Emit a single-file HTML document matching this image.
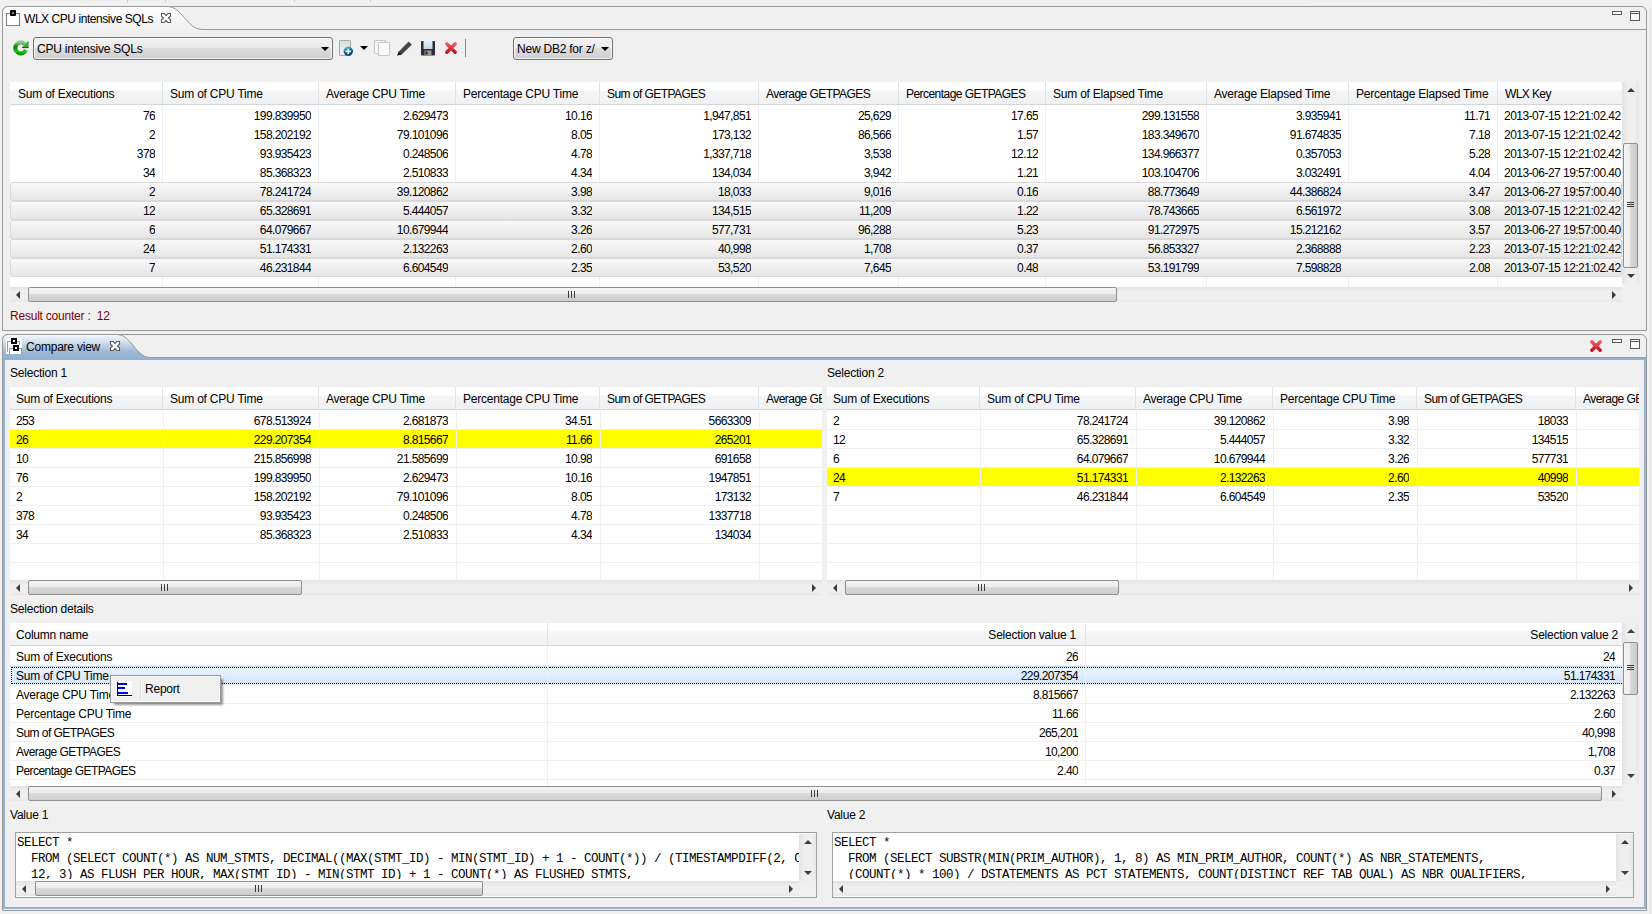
<!DOCTYPE html><html><head><meta charset="utf-8"><style>
*{margin:0;padding:0;box-sizing:border-box}
html,body{width:1652px;height:914px;overflow:hidden;background:#f0f0f0;font-family:"Liberation Sans",sans-serif;font-size:12px;color:#000}
.a{position:absolute}
.t{position:absolute;white-space:nowrap;line-height:14px;letter-spacing:-0.22px}
.cell.n,.t.n{letter-spacing:-0.62px}
.cell.dt{letter-spacing:-0.52px}
.hdr{position:absolute;background:linear-gradient(#fff 0,#fff 8px,#f4f5f7 9px,#f0f1f3 100%);border-bottom:1px solid #d5d5d5}
.hsep{position:absolute;width:1px;background:#e1e3e6}
.tbl{position:absolute;background:#fff;overflow:hidden}
.cell{position:absolute;white-space:nowrap;overflow:hidden;line-height:19px;height:19px;padding-top:1px;letter-spacing:-0.22px}
.r{text-align:right}
.sb-track-h{position:absolute;background:linear-gradient(#e6e6e6,#f0f0f0 40%,#f0f0f0 60%,#e9e9e9)}
.sb-track-v{position:absolute;background:linear-gradient(90deg,#e6e6e6,#f0f0f0 40%,#f0f0f0 60%,#e9e9e9)}
.thumb-h{position:absolute;border:1px solid #8f8f8f;border-radius:2px;background:linear-gradient(#f5f5f5 0,#ececec 45%,#d9d9d9 50%,#cdcdcd 100%)}
.thumb-v{position:absolute;border:1px solid #8f8f8f;border-radius:2px;background:linear-gradient(90deg,#f5f5f5 0,#ececec 45%,#d9d9d9 50%,#cdcdcd 100%)}
</style></head><body>
<div class="a" style="left:1310px;top:3px;width:172px;height:1px;background:#f7f7f7"></div>
<div class="a" style="left:127px;top:0px;width:1px;height:2px;background:#c8c8c8"></div>
<div class="a" style="left:165px;top:0px;width:1px;height:2px;background:#c8c8c8"></div>
<div class="a" style="left:294px;top:0px;width:1px;height:2px;background:#c8c8c8"></div>
<div class="a" style="left:370px;top:0px;width:1px;height:2px;background:#c8c8c8"></div>
<div class="a" style="left:2px;top:6px;width:1645px;height:325px;border:1px solid #9a9a9a;border-radius:6px 6px 0 0;background:#f0f0f0"></div>
<div class="a" style="left:3px;top:29px;width:1643px;height:1px;background:#9a9a9a"></div>
<svg class="a" style="left:2px;top:6px" width="210" height="24"><defs><linearGradient id="tg" x1="0" y1="0" x2="0" y2="1"><stop offset="0" stop-color="#ffffff"/><stop offset="1" stop-color="#f0f0f0"/></linearGradient></defs><path d="M0.5,24 L0.5,6.5 Q0.5,0.5 6.5,0.5 L166,0.5 C180,0.5 185,23.5 200,23.5 L210,23.5 L210,24 Z" fill="url(#tg)" stroke="none"/><path d="M0.5,24 L0.5,6.5 Q0.5,0.5 6.5,0.5 L166,0.5 C180,0.5 185,23.5 200,23.5 L210,23.5" fill="none" stroke="#9a9a9a" stroke-width="1"/></svg>
<div class="a" style="left:6px;top:13px;width:14px;height:13px;border:1px solid #808080;background:#fff"></div>
<div class="a" style="left:10px;top:10px;width:6px;height:6px;background:#000;border-radius:1px"></div>
<div class="a" style="left:12px;top:12px;width:2px;height:2px;background:#888"></div>
<div class="t " style="left:24px;top:12px;letter-spacing:-0.44px">WLX CPU intensive SQLs</div>
<svg class="a" style="left:160px;top:12px" width="12" height="12"><polygon points="1.5,1.5 4.2,1.5 6,3.6 7.8,1.5 10.5,1.5 10.5,4.2 8.4,6 10.5,7.8 10.5,10.5 7.8,10.5 6,8.4 4.2,10.5 1.5,10.5 1.5,7.8 3.6,6 1.5,4.2" fill="#fff" stroke="#5a5a5a" stroke-width="1.1"/></svg>
<div class="a" style="left:1612px;top:11px;width:10px;height:4px;border:1px solid #595959;background:#fff"></div>
<div class="a" style="left:1630px;top:11px;width:10px;height:10px;border:1px solid #595959;background:#fff"></div>
<div class="a" style="left:1631px;top:13px;width:8px;height:1px;background:#595959"></div>
<div class="a" style="left:1650px;top:8px;width:1px;height:906px;background:#e2e2e2"></div>
<svg class="a" style="left:12px;top:39px" width="18" height="18"><defs><linearGradient id="rg" x1="0" y1="0" x2="0" y2="1"><stop offset="0" stop-color="#86cf86"/><stop offset="0.4" stop-color="#0b7a0b"/><stop offset="0.85" stop-color="#16c816"/><stop offset="1" stop-color="#0a9a0a"/></linearGradient><linearGradient id="rf" x1="0" y1="0" x2="1" y2="0"><stop offset="0.55" stop-color="#f0f0f0" stop-opacity="0"/><stop offset="1" stop-color="#f0f0f0" stop-opacity="0.9"/></linearGradient></defs><path d="M13.9,10.9 A5.5,5.5 0 1 1 12.7,5.1" fill="none" stroke="url(#rg)" stroke-width="4.2"/><path d="M10,8.6 L16.6,8.6 L16.6,1.4 Z" fill="#3aa83a"/><path d="M10,8.6 L16.6,8.6" stroke="#006000" stroke-width="1"/><rect x="9" y="10" width="8" height="7" fill="url(#rf)"/></svg>
<div class="a" style="left:33px;top:37px;width:300px;height:23px;border:1px solid #707070;border-radius:3px;box-shadow:inset 0 0 0 1px rgba(255,255,255,0.75);background:linear-gradient(#f2f2f2 0,#ebebeb 45%,#dddddd 50%,#cfcfcf 100%)"></div>
<div class="t " style="left:37px;top:42px;">CPU intensive SQLs</div>
<div class="a" style="left:321px;top:47px;width:0;height:0;border-left:4px solid transparent;border-right:4px solid transparent;border-top:4px solid #000"></div>
<div class="a" style="left:339px;top:40px;width:12px;height:16px;border:1px solid #a8a8a8;border-radius:1px;background:linear-gradient(#d9dadd,#f6f6f6)"></div>
<svg class="a" style="left:343px;top:46px" width="11" height="11"><defs><linearGradient id="ng" x1="0.2" y1="0" x2="0.6" y2="1"><stop offset="0" stop-color="#5cc8e0"/><stop offset="0.5" stop-color="#0a6a9a"/><stop offset="1" stop-color="#002a66"/></linearGradient></defs><circle cx="5.3" cy="5.2" r="4.7" fill="url(#ng)"/><path d="M5.3,2.4 V8.2 M2.5,5.3 H8.1" stroke="#fff" stroke-width="1.7"/></svg>
<div class="a" style="left:360px;top:46px;width:0;height:0;border-left:4px solid transparent;border-right:4px solid transparent;border-top:4px solid #000"></div>
<div class="a" style="left:374px;top:40px;width:12px;height:14px;border:1px solid #c8c8c8;border-radius:1px;background:linear-gradient(#f0f0f0,#fcfcfc)"></div>
<div class="a" style="left:378px;top:42px;width:12px;height:14px;border:1px solid #c8c8c8;border-radius:1px;background:#fafafa"></div>
<svg class="a" style="left:396px;top:40px" width="18" height="17"><path d="M1.3,15.6 L2.6,11.8 L12.6,1.6 L15.8,4.8 L5.6,14.6 Z" fill="#3c3c3c"/><path d="M1.3,15.6 L2.6,11.8 L5.6,14.6 Z" fill="#1a1a1a"/><path d="M3.5,11.5 L13,2.2 M5,13 L14.5,3.8" stroke="#6a6a6a" stroke-width="0.6"/></svg>
<svg class="a" style="left:421px;top:41px" width="14" height="15"><defs><linearGradient id="fl" x1="0" y1="0" x2="0" y2="1"><stop offset="0" stop-color="#e6eef8"/><stop offset="1" stop-color="#c4d6ea"/></linearGradient></defs><rect x="0" y="0" width="14" height="14.5" rx="0.8" fill="#2e2e2e"/><rect x="2.5" y="0" width="9" height="8" fill="url(#fl)"/><rect x="3.5" y="9.5" width="7" height="5" fill="#9a9a9a"/><rect x="4.5" y="10.5" width="2" height="3" fill="#202020"/></svg>
<svg class="a" style="left:444px;top:41px" width="14" height="14"><defs><linearGradient id="rx" x1="0" y1="0" x2="0" y2="1"><stop offset="0" stop-color="#f05a66"/><stop offset="1" stop-color="#c8101e"/></linearGradient></defs><path d="M2.8,2.8 L11.2,11.2 M11.2,2.8 L2.8,11.2" stroke="url(#rx)" stroke-width="3.4" stroke-linecap="round"/></svg>
<div class="a" style="left:465px;top:39px;width:1px;height:18px;background:#8a8a8a"></div>
<div class="a" style="left:513px;top:37px;width:100px;height:23px;border:1px solid #707070;border-radius:3px;box-shadow:inset 0 0 0 1px rgba(255,255,255,0.75);background:linear-gradient(#f2f2f2 0,#ebebeb 45%,#dddddd 50%,#cfcfcf 100%)"></div>
<div class="t " style="left:517px;top:42px;">New DB2 for z/</div>
<div class="a" style="left:601px;top:47px;width:0;height:0;border-left:4px solid transparent;border-right:4px solid transparent;border-top:4px solid #000"></div>
<div class="tbl" style="left:10px;top:82px;width:1612px;height:205px">
<div class="hdr" style="left:0;top:0;width:1612px;height:23px"></div>
<div class="cell" style="left:8px;top:2px;width:144px;">Sum of Executions</div>
<div class="hsep" style="left:152px;top:0;height:22px"></div>
<div class="cell" style="left:160px;top:2px;width:148px;">Sum of CPU Time</div>
<div class="hsep" style="left:308px;top:0;height:22px"></div>
<div class="cell" style="left:316px;top:2px;width:129px;">Average CPU Time</div>
<div class="hsep" style="left:445px;top:0;height:22px"></div>
<div class="cell" style="left:453px;top:2px;width:136px;">Percentage CPU Time</div>
<div class="hsep" style="left:589px;top:0;height:22px"></div>
<div class="cell" style="left:597px;top:2px;width:151px;letter-spacing:-0.55px;">Sum of GETPAGES</div>
<div class="hsep" style="left:748px;top:0;height:22px"></div>
<div class="cell" style="left:756px;top:2px;width:132px;letter-spacing:-0.55px;">Average GETPAGES</div>
<div class="hsep" style="left:888px;top:0;height:22px"></div>
<div class="cell" style="left:896px;top:2px;width:139px;letter-spacing:-0.55px;">Percentage GETPAGES</div>
<div class="hsep" style="left:1035px;top:0;height:22px"></div>
<div class="cell" style="left:1043px;top:2px;width:153px;">Sum of Elapsed Time</div>
<div class="hsep" style="left:1196px;top:0;height:22px"></div>
<div class="cell" style="left:1204px;top:2px;width:134px;">Average Elapsed Time</div>
<div class="hsep" style="left:1338px;top:0;height:22px"></div>
<div class="cell" style="left:1346px;top:2px;width:141px;">Percentage Elapsed Time</div>
<div class="hsep" style="left:1487px;top:0;height:22px"></div>
<div class="cell" style="left:1495px;top:2px;width:117px;letter-spacing:-0.6px;">WLX Key</div>
<div class="a" style="left:152px;top:24px;width:1px;height:181px;background:#eaf1fa"></div>
<div class="a" style="left:308px;top:24px;width:1px;height:181px;background:#eaf1fa"></div>
<div class="a" style="left:445px;top:24px;width:1px;height:181px;background:#eaf1fa"></div>
<div class="a" style="left:589px;top:24px;width:1px;height:181px;background:#eaf1fa"></div>
<div class="a" style="left:748px;top:24px;width:1px;height:181px;background:#eaf1fa"></div>
<div class="a" style="left:888px;top:24px;width:1px;height:181px;background:#eaf1fa"></div>
<div class="a" style="left:1035px;top:24px;width:1px;height:181px;background:#eaf1fa"></div>
<div class="a" style="left:1196px;top:24px;width:1px;height:181px;background:#eaf1fa"></div>
<div class="a" style="left:1338px;top:24px;width:1px;height:181px;background:#eaf1fa"></div>
<div class="a" style="left:1487px;top:24px;width:1px;height:181px;background:#eaf1fa"></div>
<div class="a" style="left:0;top:100px;width:1612px;height:19px;border:1px solid #d9d9d9;border-radius:2px;background:linear-gradient(#f9f9f9,#e6e6e6)"></div>
<div class="a" style="left:0;top:119px;width:1612px;height:19px;border:1px solid #d9d9d9;border-radius:2px;background:linear-gradient(#f9f9f9,#e6e6e6)"></div>
<div class="a" style="left:0;top:138px;width:1612px;height:19px;border:1px solid #d9d9d9;border-radius:2px;background:linear-gradient(#f9f9f9,#e6e6e6)"></div>
<div class="a" style="left:0;top:157px;width:1612px;height:19px;border:1px solid #d9d9d9;border-radius:2px;background:linear-gradient(#f9f9f9,#e6e6e6)"></div>
<div class="a" style="left:0;top:176px;width:1612px;height:19px;border:1px solid #d9d9d9;border-radius:2px;background:linear-gradient(#f9f9f9,#e6e6e6)"></div>
<div class="cell r n" style="left:0px;top:24px;width:145px">76</div>
<div class="cell r n" style="left:152px;top:24px;width:149px">199.839950</div>
<div class="cell r n" style="left:308px;top:24px;width:130px">2.629473</div>
<div class="cell r n" style="left:445px;top:24px;width:137px">10.16</div>
<div class="cell r n" style="left:589px;top:24px;width:152px">1,947,851</div>
<div class="cell r n" style="left:748px;top:24px;width:133px">25,629</div>
<div class="cell r n" style="left:888px;top:24px;width:140px">17.65</div>
<div class="cell r n" style="left:1035px;top:24px;width:154px">299.131558</div>
<div class="cell r n" style="left:1196px;top:24px;width:135px">3.935941</div>
<div class="cell r n" style="left:1338px;top:24px;width:142px">11.71</div>
<div class="cell dt" style="left:1494px;top:24px;width:145px">2013-07-15 12:21:02.42</div>
<div class="cell r n" style="left:0px;top:43px;width:145px">2</div>
<div class="cell r n" style="left:152px;top:43px;width:149px">158.202192</div>
<div class="cell r n" style="left:308px;top:43px;width:130px">79.101096</div>
<div class="cell r n" style="left:445px;top:43px;width:137px">8.05</div>
<div class="cell r n" style="left:589px;top:43px;width:152px">173,132</div>
<div class="cell r n" style="left:748px;top:43px;width:133px">86,566</div>
<div class="cell r n" style="left:888px;top:43px;width:140px">1.57</div>
<div class="cell r n" style="left:1035px;top:43px;width:154px">183.349670</div>
<div class="cell r n" style="left:1196px;top:43px;width:135px">91.674835</div>
<div class="cell r n" style="left:1338px;top:43px;width:142px">7.18</div>
<div class="cell dt" style="left:1494px;top:43px;width:145px">2013-07-15 12:21:02.42</div>
<div class="cell r n" style="left:0px;top:62px;width:145px">378</div>
<div class="cell r n" style="left:152px;top:62px;width:149px">93.935423</div>
<div class="cell r n" style="left:308px;top:62px;width:130px">0.248506</div>
<div class="cell r n" style="left:445px;top:62px;width:137px">4.78</div>
<div class="cell r n" style="left:589px;top:62px;width:152px">1,337,718</div>
<div class="cell r n" style="left:748px;top:62px;width:133px">3,538</div>
<div class="cell r n" style="left:888px;top:62px;width:140px">12.12</div>
<div class="cell r n" style="left:1035px;top:62px;width:154px">134.966377</div>
<div class="cell r n" style="left:1196px;top:62px;width:135px">0.357053</div>
<div class="cell r n" style="left:1338px;top:62px;width:142px">5.28</div>
<div class="cell dt" style="left:1494px;top:62px;width:145px">2013-07-15 12:21:02.42</div>
<div class="cell r n" style="left:0px;top:81px;width:145px">34</div>
<div class="cell r n" style="left:152px;top:81px;width:149px">85.368323</div>
<div class="cell r n" style="left:308px;top:81px;width:130px">2.510833</div>
<div class="cell r n" style="left:445px;top:81px;width:137px">4.34</div>
<div class="cell r n" style="left:589px;top:81px;width:152px">134,034</div>
<div class="cell r n" style="left:748px;top:81px;width:133px">3,942</div>
<div class="cell r n" style="left:888px;top:81px;width:140px">1.21</div>
<div class="cell r n" style="left:1035px;top:81px;width:154px">103.104706</div>
<div class="cell r n" style="left:1196px;top:81px;width:135px">3.032491</div>
<div class="cell r n" style="left:1338px;top:81px;width:142px">4.04</div>
<div class="cell dt" style="left:1494px;top:81px;width:145px">2013-06-27 19:57:00.40</div>
<div class="cell r n" style="left:0px;top:100px;width:145px">2</div>
<div class="cell r n" style="left:152px;top:100px;width:149px">78.241724</div>
<div class="cell r n" style="left:308px;top:100px;width:130px">39.120862</div>
<div class="cell r n" style="left:445px;top:100px;width:137px">3.98</div>
<div class="cell r n" style="left:589px;top:100px;width:152px">18,033</div>
<div class="cell r n" style="left:748px;top:100px;width:133px">9,016</div>
<div class="cell r n" style="left:888px;top:100px;width:140px">0.16</div>
<div class="cell r n" style="left:1035px;top:100px;width:154px">88.773649</div>
<div class="cell r n" style="left:1196px;top:100px;width:135px">44.386824</div>
<div class="cell r n" style="left:1338px;top:100px;width:142px">3.47</div>
<div class="cell dt" style="left:1494px;top:100px;width:145px">2013-06-27 19:57:00.40</div>
<div class="cell r n" style="left:0px;top:119px;width:145px">12</div>
<div class="cell r n" style="left:152px;top:119px;width:149px">65.328691</div>
<div class="cell r n" style="left:308px;top:119px;width:130px">5.444057</div>
<div class="cell r n" style="left:445px;top:119px;width:137px">3.32</div>
<div class="cell r n" style="left:589px;top:119px;width:152px">134,515</div>
<div class="cell r n" style="left:748px;top:119px;width:133px">11,209</div>
<div class="cell r n" style="left:888px;top:119px;width:140px">1.22</div>
<div class="cell r n" style="left:1035px;top:119px;width:154px">78.743665</div>
<div class="cell r n" style="left:1196px;top:119px;width:135px">6.561972</div>
<div class="cell r n" style="left:1338px;top:119px;width:142px">3.08</div>
<div class="cell dt" style="left:1494px;top:119px;width:145px">2013-07-15 12:21:02.42</div>
<div class="cell r n" style="left:0px;top:138px;width:145px">6</div>
<div class="cell r n" style="left:152px;top:138px;width:149px">64.079667</div>
<div class="cell r n" style="left:308px;top:138px;width:130px">10.679944</div>
<div class="cell r n" style="left:445px;top:138px;width:137px">3.26</div>
<div class="cell r n" style="left:589px;top:138px;width:152px">577,731</div>
<div class="cell r n" style="left:748px;top:138px;width:133px">96,288</div>
<div class="cell r n" style="left:888px;top:138px;width:140px">5.23</div>
<div class="cell r n" style="left:1035px;top:138px;width:154px">91.272975</div>
<div class="cell r n" style="left:1196px;top:138px;width:135px">15.212162</div>
<div class="cell r n" style="left:1338px;top:138px;width:142px">3.57</div>
<div class="cell dt" style="left:1494px;top:138px;width:145px">2013-06-27 19:57:00.40</div>
<div class="cell r n" style="left:0px;top:157px;width:145px">24</div>
<div class="cell r n" style="left:152px;top:157px;width:149px">51.174331</div>
<div class="cell r n" style="left:308px;top:157px;width:130px">2.132263</div>
<div class="cell r n" style="left:445px;top:157px;width:137px">2.60</div>
<div class="cell r n" style="left:589px;top:157px;width:152px">40,998</div>
<div class="cell r n" style="left:748px;top:157px;width:133px">1,708</div>
<div class="cell r n" style="left:888px;top:157px;width:140px">0.37</div>
<div class="cell r n" style="left:1035px;top:157px;width:154px">56.853327</div>
<div class="cell r n" style="left:1196px;top:157px;width:135px">2.368888</div>
<div class="cell r n" style="left:1338px;top:157px;width:142px">2.23</div>
<div class="cell dt" style="left:1494px;top:157px;width:145px">2013-07-15 12:21:02.42</div>
<div class="cell r n" style="left:0px;top:176px;width:145px">7</div>
<div class="cell r n" style="left:152px;top:176px;width:149px">46.231844</div>
<div class="cell r n" style="left:308px;top:176px;width:130px">6.604549</div>
<div class="cell r n" style="left:445px;top:176px;width:137px">2.35</div>
<div class="cell r n" style="left:589px;top:176px;width:152px">53,520</div>
<div class="cell r n" style="left:748px;top:176px;width:133px">7,645</div>
<div class="cell r n" style="left:888px;top:176px;width:140px">0.48</div>
<div class="cell r n" style="left:1035px;top:176px;width:154px">53.191799</div>
<div class="cell r n" style="left:1196px;top:176px;width:135px">7.598828</div>
<div class="cell r n" style="left:1338px;top:176px;width:142px">2.08</div>
<div class="cell dt" style="left:1494px;top:176px;width:145px">2013-07-15 12:21:02.42</div>
</div>
<div class="a" style="left:1622px;top:82px;width:17px;height:202px;background:linear-gradient(90deg,#e3e3e3,#eeeeee 30%,#f0f0f0 70%,#e8e8e8)"></div>
<div class="a" style="left:1627px;top:88px;width:0;height:0;border-left:4px solid transparent;border-right:4px solid transparent;border-bottom:4px solid #3d3d3d"></div>
<div class="a" style="left:1627px;top:274px;width:0;height:0;border-left:4px solid transparent;border-right:4px solid transparent;border-top:4px solid #3d3d3d"></div>
<div class="thumb-v" style="left:1623px;top:143px;width:15px;height:125px"></div>
<div class="a" style="left:1627px;top:202px;width:7px;height:1px;background:#3a3a3a"></div>
<div class="a" style="left:1627px;top:204px;width:7px;height:1px;background:#3a3a3a"></div>
<div class="a" style="left:1627px;top:206px;width:7px;height:1px;background:#3a3a3a"></div>
<div class="a" style="left:10px;top:287px;width:1612px;height:15px;background:linear-gradient(#e3e3e3,#eeeeee 30%,#f0f0f0 70%,#e8e8e8)"></div>
<div class="a" style="left:16px;top:291px;width:0;height:0;border-top:4px solid transparent;border-bottom:4px solid transparent;border-right:4px solid #3d3d3d"></div>
<div class="a" style="left:1612px;top:291px;width:0;height:0;border-top:4px solid transparent;border-bottom:4px solid transparent;border-left:4px solid #3d3d3d"></div>
<div class="thumb-h" style="left:28px;top:287px;width:1089px;height:15px"></div>
<div class="a" style="left:568px;top:291px;width:1px;height:7px;background:#3a3a3a"></div>
<div class="a" style="left:571px;top:291px;width:1px;height:7px;background:#3a3a3a"></div>
<div class="a" style="left:574px;top:291px;width:1px;height:7px;background:#3a3a3a"></div>
<div class="a" style="left:1622px;top:284px;width:18px;height:18px;background:#f0f0f0"></div>
<div class="t " style="left:10px;top:309px;color:#800000">Result counter :&nbsp; 12</div>
<div class="a" style="left:2px;top:334px;width:1645px;height:577px;border:1px solid #9a9a9a;border-radius:6px 6px 0 0;background:#f0f0f0"></div>
<svg class="a" style="left:2px;top:334px" width="160" height="24"><defs><linearGradient id="bg" x1="0" y1="0" x2="0" y2="1"><stop offset="0" stop-color="#f4f8fc"/><stop offset="0.3" stop-color="#d5e1ee"/><stop offset="0.75" stop-color="#9cb6d4"/><stop offset="1" stop-color="#95b1d2"/></linearGradient></defs><path d="M0.5,24 L0.5,6.5 Q0.5,0.5 6.5,0.5 L115.5,0.5 C129,0.5 134,23.5 148,23.5 L160,23.5 L160,24 Z" fill="url(#bg)"/><path d="M0.5,24 L0.5,6.5 Q0.5,0.5 6.5,0.5 L115.5,0.5 C129,0.5 134,23.5 148,23.5 L160,23.5" fill="none" stroke="#9a9a9a"/></svg>
<div class="a" style="left:150px;top:357px;width:1496px;height:1px;background:#9a9a9a"></div>
<div class="a" style="left:3px;top:358px;width:1643px;height:2px;background:#95b1d2"></div>
<div class="a" style="left:3px;top:358px;width:2px;height:551px;background:#95b1d2"></div>
<div class="a" style="left:1644px;top:358px;width:2px;height:551px;background:#95b1d2"></div>
<div class="a" style="left:3px;top:907px;width:1643px;height:2px;background:#95b1d2"></div>
<div class="a" style="left:6px;top:338px;width:16px;height:16px;background:#fff"></div>
<div class="a" style="left:7px;top:341px;width:1px;height:11px;background:#9a9a9a"></div>
<div class="a" style="left:7px;top:341px;width:13px;height:1px;background:#9a9a9a"></div>
<div class="a" style="left:19px;top:341px;width:1px;height:4px;background:#9a9a9a"></div>
<div class="a" style="left:9px;top:348px;width:1px;height:6px;background:#9a9a9a"></div>
<div class="a" style="left:9px;top:348px;width:12px;height:1px;background:#9a9a9a"></div>
<div class="a" style="left:21px;top:348px;width:1px;height:6px;background:#9a9a9a"></div>
<div class="a" style="left:11px;top:338px;width:6px;height:6px;border:2px solid #000;background:#fff"></div>
<div class="a" style="left:13px;top:345px;width:6px;height:6px;border:2px solid #000;background:#fff"></div>
<div class="t " style="left:26px;top:340px;">Compare view</div>
<svg class="a" style="left:109px;top:340px" width="12" height="12"><polygon points="1.5,1.5 4.2,1.5 6,3.6 7.8,1.5 10.5,1.5 10.5,4.2 8.4,6 10.5,7.8 10.5,10.5 7.8,10.5 6,8.4 4.2,10.5 1.5,10.5 1.5,7.8 3.6,6 1.5,4.2" fill="#fff" stroke="#5a5a5a" stroke-width="1.1"/></svg>
<svg class="a" style="left:1589px;top:339px" width="14" height="14"><defs><linearGradient id="rx2" x1="0" y1="0" x2="0" y2="1"><stop offset="0" stop-color="#f05a66"/><stop offset="1" stop-color="#c8101e"/></linearGradient></defs><path d="M2.8,2.8 L11.2,11.2 M11.2,2.8 L2.8,11.2" stroke="url(#rx2)" stroke-width="3.4" stroke-linecap="round"/></svg>
<div class="a" style="left:1612px;top:339px;width:10px;height:4px;border:1px solid #595959;background:#fff"></div>
<div class="a" style="left:1630px;top:339px;width:10px;height:10px;border:1px solid #595959;background:#fff"></div>
<div class="a" style="left:1631px;top:341px;width:8px;height:1px;background:#595959"></div>
<div class="t " style="left:10px;top:366px;">Selection 1</div>
<div class="t " style="left:827px;top:366px;">Selection 2</div>
<div class="tbl" style="left:10px;top:387px;width:812px;height:193px">
<div class="hdr" style="left:0;top:0;width:812px;height:23px"></div>
<div class="cell" style="left:6px;top:2px;width:144px;">Sum of Executions</div>
<div class="hsep" style="left:152px;top:0;height:22px"></div>
<div class="cell" style="left:160px;top:2px;width:148px;">Sum of CPU Time</div>
<div class="hsep" style="left:308px;top:0;height:22px"></div>
<div class="cell" style="left:316px;top:2px;width:129px;">Average CPU Time</div>
<div class="hsep" style="left:445px;top:0;height:22px"></div>
<div class="cell" style="left:453px;top:2px;width:136px;">Percentage CPU Time</div>
<div class="hsep" style="left:589px;top:0;height:22px"></div>
<div class="cell" style="left:597px;top:2px;width:151px;letter-spacing:-0.55px;">Sum of GETPAGES</div>
<div class="hsep" style="left:748px;top:0;height:22px"></div>
<div class="cell" style="left:756px;top:2px;width:234px;letter-spacing:-0.55px;">Average GETPAGES</div>
<div class="a" style="left:0;top:42px;width:812px;height:1px;background:#f0f0f0"></div>
<div class="a" style="left:0;top:43px;width:812px;height:19px;background:#ffff00"></div>
<div class="a" style="left:0;top:61px;width:812px;height:1px;background:#f0f0f0"></div>
<div class="a" style="left:0;top:80px;width:812px;height:1px;background:#f0f0f0"></div>
<div class="a" style="left:0;top:99px;width:812px;height:1px;background:#f0f0f0"></div>
<div class="a" style="left:0;top:118px;width:812px;height:1px;background:#f0f0f0"></div>
<div class="a" style="left:0;top:137px;width:812px;height:1px;background:#f0f0f0"></div>
<div class="a" style="left:0;top:156px;width:812px;height:1px;background:#f0f0f0"></div>
<div class="a" style="left:0;top:175px;width:812px;height:1px;background:#f0f0f0"></div>
<div class="a" style="left:0;top:194px;width:812px;height:1px;background:#f0f0f0"></div>
<div class="a" style="left:153px;top:24px;width:1px;height:169px;background:#f0f0f0"></div>
<div class="a" style="left:309px;top:24px;width:1px;height:169px;background:#f0f0f0"></div>
<div class="a" style="left:446px;top:24px;width:1px;height:169px;background:#f0f0f0"></div>
<div class="a" style="left:590px;top:24px;width:1px;height:169px;background:#f0f0f0"></div>
<div class="a" style="left:749px;top:24px;width:1px;height:169px;background:#f0f0f0"></div>
<div class="cell n" style="left:6px;top:24px;width:145px">253</div>
<div class="cell r n" style="left:152px;top:24px;width:149px">678.513924</div>
<div class="cell r n" style="left:308px;top:24px;width:130px">2.681873</div>
<div class="cell r n" style="left:445px;top:24px;width:137px">34.51</div>
<div class="cell r n" style="left:589px;top:24px;width:152px">5663309</div>
<div class="cell n" style="left:6px;top:43px;width:145px">26</div>
<div class="cell r n" style="left:152px;top:43px;width:149px">229.207354</div>
<div class="cell r n" style="left:308px;top:43px;width:130px">8.815667</div>
<div class="cell r n" style="left:445px;top:43px;width:137px">11.66</div>
<div class="cell r n" style="left:589px;top:43px;width:152px">265201</div>
<div class="cell n" style="left:6px;top:62px;width:145px">10</div>
<div class="cell r n" style="left:152px;top:62px;width:149px">215.856998</div>
<div class="cell r n" style="left:308px;top:62px;width:130px">21.585699</div>
<div class="cell r n" style="left:445px;top:62px;width:137px">10.98</div>
<div class="cell r n" style="left:589px;top:62px;width:152px">691658</div>
<div class="cell n" style="left:6px;top:81px;width:145px">76</div>
<div class="cell r n" style="left:152px;top:81px;width:149px">199.839950</div>
<div class="cell r n" style="left:308px;top:81px;width:130px">2.629473</div>
<div class="cell r n" style="left:445px;top:81px;width:137px">10.16</div>
<div class="cell r n" style="left:589px;top:81px;width:152px">1947851</div>
<div class="cell n" style="left:6px;top:100px;width:145px">2</div>
<div class="cell r n" style="left:152px;top:100px;width:149px">158.202192</div>
<div class="cell r n" style="left:308px;top:100px;width:130px">79.101096</div>
<div class="cell r n" style="left:445px;top:100px;width:137px">8.05</div>
<div class="cell r n" style="left:589px;top:100px;width:152px">173132</div>
<div class="cell n" style="left:6px;top:119px;width:145px">378</div>
<div class="cell r n" style="left:152px;top:119px;width:149px">93.935423</div>
<div class="cell r n" style="left:308px;top:119px;width:130px">0.248506</div>
<div class="cell r n" style="left:445px;top:119px;width:137px">4.78</div>
<div class="cell r n" style="left:589px;top:119px;width:152px">1337718</div>
<div class="cell n" style="left:6px;top:138px;width:145px">34</div>
<div class="cell r n" style="left:152px;top:138px;width:149px">85.368323</div>
<div class="cell r n" style="left:308px;top:138px;width:130px">2.510833</div>
<div class="cell r n" style="left:445px;top:138px;width:137px">4.34</div>
<div class="cell r n" style="left:589px;top:138px;width:152px">134034</div>
</div>
<div class="a" style="left:10px;top:580px;width:812px;height:15px;background:linear-gradient(#e3e3e3,#eeeeee 30%,#f0f0f0 70%,#e8e8e8)"></div>
<div class="a" style="left:16px;top:584px;width:0;height:0;border-top:4px solid transparent;border-bottom:4px solid transparent;border-right:4px solid #3d3d3d"></div>
<div class="a" style="left:812px;top:584px;width:0;height:0;border-top:4px solid transparent;border-bottom:4px solid transparent;border-left:4px solid #3d3d3d"></div>
<div class="thumb-h" style="left:28px;top:580px;width:274px;height:15px"></div>
<div class="a" style="left:161px;top:584px;width:1px;height:7px;background:#3a3a3a"></div>
<div class="a" style="left:164px;top:584px;width:1px;height:7px;background:#3a3a3a"></div>
<div class="a" style="left:167px;top:584px;width:1px;height:7px;background:#3a3a3a"></div>
<div class="tbl" style="left:827px;top:387px;width:812px;height:193px">
<div class="hdr" style="left:0;top:0;width:812px;height:23px"></div>
<div class="cell" style="left:6px;top:2px;width:144px;">Sum of Executions</div>
<div class="hsep" style="left:152px;top:0;height:22px"></div>
<div class="cell" style="left:160px;top:2px;width:148px;">Sum of CPU Time</div>
<div class="hsep" style="left:308px;top:0;height:22px"></div>
<div class="cell" style="left:316px;top:2px;width:129px;">Average CPU Time</div>
<div class="hsep" style="left:445px;top:0;height:22px"></div>
<div class="cell" style="left:453px;top:2px;width:136px;">Percentage CPU Time</div>
<div class="hsep" style="left:589px;top:0;height:22px"></div>
<div class="cell" style="left:597px;top:2px;width:151px;letter-spacing:-0.55px;">Sum of GETPAGES</div>
<div class="hsep" style="left:748px;top:0;height:22px"></div>
<div class="cell" style="left:756px;top:2px;width:234px;letter-spacing:-0.55px;">Average GETPAGES</div>
<div class="a" style="left:0;top:42px;width:812px;height:1px;background:#f0f0f0"></div>
<div class="a" style="left:0;top:61px;width:812px;height:1px;background:#f0f0f0"></div>
<div class="a" style="left:0;top:80px;width:812px;height:1px;background:#f0f0f0"></div>
<div class="a" style="left:0;top:81px;width:812px;height:19px;background:#ffff00"></div>
<div class="a" style="left:0;top:99px;width:812px;height:1px;background:#f0f0f0"></div>
<div class="a" style="left:0;top:118px;width:812px;height:1px;background:#f0f0f0"></div>
<div class="a" style="left:0;top:137px;width:812px;height:1px;background:#f0f0f0"></div>
<div class="a" style="left:0;top:156px;width:812px;height:1px;background:#f0f0f0"></div>
<div class="a" style="left:0;top:175px;width:812px;height:1px;background:#f0f0f0"></div>
<div class="a" style="left:0;top:194px;width:812px;height:1px;background:#f0f0f0"></div>
<div class="a" style="left:153px;top:24px;width:1px;height:169px;background:#f0f0f0"></div>
<div class="a" style="left:309px;top:24px;width:1px;height:169px;background:#f0f0f0"></div>
<div class="a" style="left:446px;top:24px;width:1px;height:169px;background:#f0f0f0"></div>
<div class="a" style="left:590px;top:24px;width:1px;height:169px;background:#f0f0f0"></div>
<div class="a" style="left:749px;top:24px;width:1px;height:169px;background:#f0f0f0"></div>
<div class="cell n" style="left:6px;top:24px;width:145px">2</div>
<div class="cell r n" style="left:152px;top:24px;width:149px">78.241724</div>
<div class="cell r n" style="left:308px;top:24px;width:130px">39.120862</div>
<div class="cell r n" style="left:445px;top:24px;width:137px">3.98</div>
<div class="cell r n" style="left:589px;top:24px;width:152px">18033</div>
<div class="cell n" style="left:6px;top:43px;width:145px">12</div>
<div class="cell r n" style="left:152px;top:43px;width:149px">65.328691</div>
<div class="cell r n" style="left:308px;top:43px;width:130px">5.444057</div>
<div class="cell r n" style="left:445px;top:43px;width:137px">3.32</div>
<div class="cell r n" style="left:589px;top:43px;width:152px">134515</div>
<div class="cell n" style="left:6px;top:62px;width:145px">6</div>
<div class="cell r n" style="left:152px;top:62px;width:149px">64.079667</div>
<div class="cell r n" style="left:308px;top:62px;width:130px">10.679944</div>
<div class="cell r n" style="left:445px;top:62px;width:137px">3.26</div>
<div class="cell r n" style="left:589px;top:62px;width:152px">577731</div>
<div class="cell n" style="left:6px;top:81px;width:145px">24</div>
<div class="cell r n" style="left:152px;top:81px;width:149px">51.174331</div>
<div class="cell r n" style="left:308px;top:81px;width:130px">2.132263</div>
<div class="cell r n" style="left:445px;top:81px;width:137px">2.60</div>
<div class="cell r n" style="left:589px;top:81px;width:152px">40998</div>
<div class="cell n" style="left:6px;top:100px;width:145px">7</div>
<div class="cell r n" style="left:152px;top:100px;width:149px">46.231844</div>
<div class="cell r n" style="left:308px;top:100px;width:130px">6.604549</div>
<div class="cell r n" style="left:445px;top:100px;width:137px">2.35</div>
<div class="cell r n" style="left:589px;top:100px;width:152px">53520</div>
</div>
<div class="a" style="left:827px;top:580px;width:812px;height:15px;background:linear-gradient(#e3e3e3,#eeeeee 30%,#f0f0f0 70%,#e8e8e8)"></div>
<div class="a" style="left:833px;top:584px;width:0;height:0;border-top:4px solid transparent;border-bottom:4px solid transparent;border-right:4px solid #3d3d3d"></div>
<div class="a" style="left:1629px;top:584px;width:0;height:0;border-top:4px solid transparent;border-bottom:4px solid transparent;border-left:4px solid #3d3d3d"></div>
<div class="thumb-h" style="left:845px;top:580px;width:274px;height:15px"></div>
<div class="a" style="left:978px;top:584px;width:1px;height:7px;background:#3a3a3a"></div>
<div class="a" style="left:981px;top:584px;width:1px;height:7px;background:#3a3a3a"></div>
<div class="a" style="left:984px;top:584px;width:1px;height:7px;background:#3a3a3a"></div>
<div class="t " style="left:10px;top:602px;">Selection details</div>
<div class="tbl" style="left:10px;top:623px;width:1612px;height:163px">
<div class="hdr" style="left:0;top:0;width:1612px;height:23px"></div>
<div class="cell" style="left:6px;top:2px;width:529px;">Column name</div>
<div class="hsep" style="left:537px;top:0;height:22px"></div>
<div class="cell r" style="left:537px;top:2px;width:529px">Selection value 1</div>
<div class="hsep" style="left:1075px;top:0;height:22px"></div>
<div class="cell r" style="left:1075px;top:2px;width:533px">Selection value 2</div>
<div class="a" style="left:0;top:42px;width:1612px;height:1px;background:#f0f0f0"></div>
<div class="a" style="left:0;top:43px;width:1612px;height:19px;background:linear-gradient(#eef5fe,#d0e3fa);border-top:1px solid #c4daf5"></div>
<div class="a" style="left:0;top:61px;width:1612px;height:1px;background:#f0f0f0"></div>
<div class="a" style="left:0;top:80px;width:1612px;height:1px;background:#f0f0f0"></div>
<div class="a" style="left:0;top:99px;width:1612px;height:1px;background:#f0f0f0"></div>
<div class="a" style="left:0;top:118px;width:1612px;height:1px;background:#f0f0f0"></div>
<div class="a" style="left:0;top:137px;width:1612px;height:1px;background:#f0f0f0"></div>
<div class="a" style="left:0;top:156px;width:1612px;height:1px;background:#f0f0f0"></div>
<div class="a" style="left:0;top:175px;width:1612px;height:1px;background:#f0f0f0"></div>
<div class="a" style="left:537px;top:24px;width:1px;height:139px;background:#eaf1fa"></div>
<div class="a" style="left:1075px;top:24px;width:1px;height:139px;background:#eaf1fa"></div>
<div class="cell" style="left:6px;top:24px;width:531px;">Sum of Executions</div>
<div class="cell r n" style="left:537px;top:24px;width:531px">26</div>
<div class="cell r n" style="left:1075px;top:24px;width:530px">24</div>
<div class="cell" style="left:6px;top:43px;width:531px;">Sum of CPU Time</div>
<div class="cell r n" style="left:537px;top:43px;width:531px">229.207354</div>
<div class="cell r n" style="left:1075px;top:43px;width:530px">51.174331</div>
<div class="cell" style="left:6px;top:62px;width:531px;">Average CPU Time</div>
<div class="cell r n" style="left:537px;top:62px;width:531px">8.815667</div>
<div class="cell r n" style="left:1075px;top:62px;width:530px">2.132263</div>
<div class="cell" style="left:6px;top:81px;width:531px;">Percentage CPU Time</div>
<div class="cell r n" style="left:537px;top:81px;width:531px">11.66</div>
<div class="cell r n" style="left:1075px;top:81px;width:530px">2.60</div>
<div class="cell" style="left:6px;top:100px;width:531px;letter-spacing:-0.55px;">Sum of GETPAGES</div>
<div class="cell r n" style="left:537px;top:100px;width:531px">265,201</div>
<div class="cell r n" style="left:1075px;top:100px;width:530px">40,998</div>
<div class="cell" style="left:6px;top:119px;width:531px;letter-spacing:-0.55px;">Average GETPAGES</div>
<div class="cell r n" style="left:537px;top:119px;width:531px">10,200</div>
<div class="cell r n" style="left:1075px;top:119px;width:530px">1,708</div>
<div class="cell" style="left:6px;top:138px;width:531px;letter-spacing:-0.55px;">Percentage GETPAGES</div>
<div class="cell r n" style="left:537px;top:138px;width:531px">2.40</div>
<div class="cell r n" style="left:1075px;top:138px;width:530px">0.37</div>
</div>
<div class="a" style="left:11px;top:667px;width:536px;height:17px;border:1px dotted #000;border-right:none"></div>
<div class="a" style="left:549px;top:667px;width:536px;height:17px;border-top:1px dotted #000;border-bottom:1px dotted #000"></div>
<div class="a" style="left:1087px;top:667px;width:535px;height:17px;border-top:1px dotted #000;border-bottom:1px dotted #000"></div>
<div class="a" style="left:1622px;top:623px;width:17px;height:161px;background:linear-gradient(90deg,#e3e3e3,#eeeeee 30%,#f0f0f0 70%,#e8e8e8)"></div>
<div class="a" style="left:1627px;top:629px;width:0;height:0;border-left:4px solid transparent;border-right:4px solid transparent;border-bottom:4px solid #3d3d3d"></div>
<div class="a" style="left:1627px;top:774px;width:0;height:0;border-left:4px solid transparent;border-right:4px solid transparent;border-top:4px solid #3d3d3d"></div>
<div class="thumb-v" style="left:1623px;top:642px;width:15px;height:53px"></div>
<div class="a" style="left:1627px;top:665px;width:7px;height:1px;background:#3a3a3a"></div>
<div class="a" style="left:1627px;top:667px;width:7px;height:1px;background:#3a3a3a"></div>
<div class="a" style="left:1627px;top:669px;width:7px;height:1px;background:#3a3a3a"></div>
<div class="a" style="left:10px;top:786px;width:1612px;height:15px;background:linear-gradient(#e3e3e3,#eeeeee 30%,#f0f0f0 70%,#e8e8e8)"></div>
<div class="a" style="left:16px;top:790px;width:0;height:0;border-top:4px solid transparent;border-bottom:4px solid transparent;border-right:4px solid #3d3d3d"></div>
<div class="a" style="left:1612px;top:790px;width:0;height:0;border-top:4px solid transparent;border-bottom:4px solid transparent;border-left:4px solid #3d3d3d"></div>
<div class="thumb-h" style="left:28px;top:786px;width:1574px;height:15px"></div>
<div class="a" style="left:811px;top:790px;width:1px;height:7px;background:#3a3a3a"></div>
<div class="a" style="left:814px;top:790px;width:1px;height:7px;background:#3a3a3a"></div>
<div class="a" style="left:817px;top:790px;width:1px;height:7px;background:#3a3a3a"></div>
<div class="a" style="left:114px;top:679px;width:109px;height:26px;background:rgba(0,0,0,0.42);filter:blur(1.2px)"></div>
<div class="a" style="left:110px;top:675px;width:111px;height:28px;border:1px solid #979797;background:#f0f0f0"></div>
<div class="a" style="left:111px;top:676px;width:109px;height:26px;border:1px solid #fafafa"></div>
<div class="a" style="left:116px;top:681px;width:16px;height:16px;background:#fff"></div>
<div class="a" style="left:117px;top:682px;width:1px;height:14px;background:#000"></div>
<div class="a" style="left:117px;top:695px;width:15px;height:1px;background:#000"></div>
<div class="a" style="left:118px;top:683px;width:9px;height:2px;background:#0000ff"></div>
<div class="a" style="left:118px;top:687px;width:7px;height:2px;background:#0000ff"></div>
<div class="a" style="left:118px;top:692px;width:10px;height:2px;background:#0000ff"></div>
<div class="a" style="left:140px;top:678px;width:1px;height:22px;background:#e0e0e0"></div>
<div class="a" style="left:141px;top:678px;width:1px;height:22px;background:#ffffff"></div>
<div class="t " style="left:145px;top:682px;">Report</div>
<div class="t " style="left:10px;top:808px;">Value 1</div>
<div class="t " style="left:827px;top:808px;">Value 2</div>
<div class="a" style="left:15px;top:832px;width:802px;height:66px;border:1px solid #a0a0a0;background:#fff"></div>
<div class="a" style="left:16px;top:833px;width:783px;height:46px;overflow:hidden">
<div class="a" style="left:1px;top:2px;white-space:pre;font-family:'Liberation Mono', monospace;font-size:12.5px;letter-spacing:-0.5px;line-height:16px">SELECT *</div>
<div class="a" style="left:1px;top:18px;white-space:pre;font-family:'Liberation Mono', monospace;font-size:12.5px;letter-spacing:-0.5px;line-height:16px">  FROM (SELECT COUNT(*) AS NUM_STMTS, DECIMAL((MAX(STMT_ID) - MIN(STMT_ID) + 1 - COUNT(*)) / (TIMESTAMPDIFF(2, CHAR(MAX(TIMESTAMP) - MIN(TIMESTAMP))) / 3600.0),</div>
<div class="a" style="left:1px;top:34px;white-space:pre;font-family:'Liberation Mono', monospace;font-size:12.5px;letter-spacing:-0.5px;line-height:16px">  12, 3) AS FLUSH_PER_HOUR, MAX(STMT_ID) - MIN(STMT_ID) + 1 - COUNT(*) AS FLUSHED_STMTS,</div>
</div>
<div class="a" style="left:799px;top:834px;width:17px;height:47px;background:linear-gradient(90deg,#e3e3e3,#eeeeee 30%,#f0f0f0 70%,#e8e8e8)"></div>
<div class="a" style="left:804px;top:840px;width:0;height:0;border-left:4px solid transparent;border-right:4px solid transparent;border-bottom:4px solid #3d3d3d"></div>
<div class="a" style="left:804px;top:871px;width:0;height:0;border-left:4px solid transparent;border-right:4px solid transparent;border-top:4px solid #3d3d3d"></div>
<div class="a" style="left:16px;top:881px;width:783px;height:15px;background:linear-gradient(#e3e3e3,#eeeeee 30%,#f0f0f0 70%,#e8e8e8)"></div>
<div class="a" style="left:22px;top:885px;width:0;height:0;border-top:4px solid transparent;border-bottom:4px solid transparent;border-right:4px solid #3d3d3d"></div>
<div class="a" style="left:789px;top:885px;width:0;height:0;border-top:4px solid transparent;border-bottom:4px solid transparent;border-left:4px solid #3d3d3d"></div>
<div class="thumb-h" style="left:35px;top:881px;width:448px;height:15px"></div>
<div class="a" style="left:255px;top:885px;width:1px;height:7px;background:#3a3a3a"></div>
<div class="a" style="left:258px;top:885px;width:1px;height:7px;background:#3a3a3a"></div>
<div class="a" style="left:261px;top:885px;width:1px;height:7px;background:#3a3a3a"></div>
<div class="a" style="left:799px;top:881px;width:17px;height:16px;background:#f0f0f0"></div>
<div class="a" style="left:832px;top:832px;width:802px;height:66px;border:1px solid #a0a0a0;background:#fff"></div>
<div class="a" style="left:833px;top:833px;width:783px;height:46px;overflow:hidden">
<div class="a" style="left:1px;top:2px;white-space:pre;font-family:'Liberation Mono', monospace;font-size:12.5px;letter-spacing:-0.5px;line-height:16px">SELECT *</div>
<div class="a" style="left:1px;top:18px;white-space:pre;font-family:'Liberation Mono', monospace;font-size:12.5px;letter-spacing:-0.5px;line-height:16px">  FROM (SELECT SUBSTR(MIN(PRIM_AUTHOR), 1, 8) AS MIN_PRIM_AUTHOR, COUNT(*) AS NBR_STATEMENTS,</div>
<div class="a" style="left:1px;top:34px;white-space:pre;font-family:'Liberation Mono', monospace;font-size:12.5px;letter-spacing:-0.5px;line-height:16px">  (COUNT(*) * 100) / DSTATEMENTS AS PCT_STATEMENTS, COUNT(DISTINCT REF_TAB_QUAL) AS NBR_QUALIFIERS,</div>
</div>
<div class="a" style="left:1616px;top:834px;width:17px;height:47px;background:linear-gradient(90deg,#e3e3e3,#eeeeee 30%,#f0f0f0 70%,#e8e8e8)"></div>
<div class="a" style="left:1621px;top:840px;width:0;height:0;border-left:4px solid transparent;border-right:4px solid transparent;border-bottom:4px solid #3d3d3d"></div>
<div class="a" style="left:1621px;top:871px;width:0;height:0;border-left:4px solid transparent;border-right:4px solid transparent;border-top:4px solid #3d3d3d"></div>
<div class="a" style="left:833px;top:881px;width:783px;height:15px;background:linear-gradient(#e3e3e3,#eeeeee 30%,#f0f0f0 70%,#e8e8e8)"></div>
<div class="a" style="left:839px;top:885px;width:0;height:0;border-top:4px solid transparent;border-bottom:4px solid transparent;border-right:4px solid #3d3d3d"></div>
<div class="a" style="left:1606px;top:885px;width:0;height:0;border-top:4px solid transparent;border-bottom:4px solid transparent;border-left:4px solid #3d3d3d"></div>
<div class="a" style="left:1616px;top:881px;width:17px;height:16px;background:#f0f0f0"></div>
</body></html>
